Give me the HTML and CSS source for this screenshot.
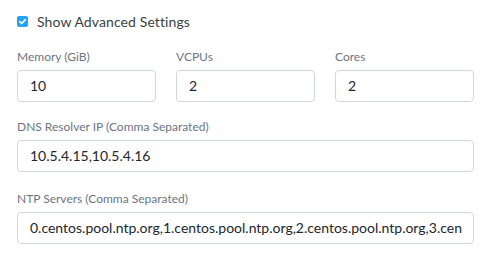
FILE: index.html
```html
<!DOCTYPE html>
<html>
<head>
<meta charset="utf-8">
<link rel="stylesheet" href="styles.css">
</head>
<body>
<div class="form">
  <label class="check-row">
    <span class="checkbox">
      <svg width="11" height="11" viewBox="0 0 11 11"><path d="M2.8 5.6 L4.7 7.5 L8.3 3.6" fill="none" stroke="#fff" stroke-width="1.6" stroke-linecap="round" stroke-linejoin="round"/></svg>
    </span>
    <span class="check-label">Show Advanced Settings</span>
  </label>
  <div class="row three">
    <div class="field">
      <div class="label">Memory (GiB)</div>
      <div class="input"><span class="value">10</span></div>
    </div>
    <div class="field">
      <div class="label">VCPUs</div>
      <div class="input"><span class="value">2</span></div>
    </div>
    <div class="field">
      <div class="label">Cores</div>
      <div class="input"><span class="value">2</span></div>
    </div>
  </div>
  <div class="field full">
    <div class="label">DNS Resolver IP (Comma Separated)</div>
    <div class="input"><span class="value">10.5.4.15,10.5.4.16</span></div>
  </div>
  <div class="field full">
    <div class="label">NTP Servers (Comma Separated)</div>
    <div class="input"><span class="value">0.centos.pool.ntp.org,1.centos.pool.ntp.org,2.centos.pool.ntp.org,3.centos.pool.ntp.org</span></div>
  </div>
</div>
</body>
</html>
```
FILE: styles.css
```css
html, body {
  margin: 0;
  padding: 0;
  background: #fff;
}
body {
  font-family: Lato, "Open Sans", sans-serif;
  color: #22272e;
}
.form {
  padding: 16px 11px 0 17px;
  width: 457px;
}
.check-row {
  display: flex;
  align-items: center;
  height: 11px;
  margin-bottom: 23px;
}
.checkbox {
  width: 11px;
  height: 11px;
  border-radius: 2px;
  background: #22a5f7;
  display: flex;
}
.check-label {
  margin-left: 9px;
  font-size: 14px;
  color: #3a3f45;
  letter-spacing: 0.1px;
}
.row.three {
  display: grid;
  grid-template-columns: 139px 139px 139px;
  column-gap: 20px;
}
.label {
  font-size: 12px;
  color: #6a7685;
  height: 14px;
  line-height: 14px;
  margin-bottom: 6px;
}
.input {
  box-sizing: border-box;
  height: 32px;
  border: 1px solid #d2d6db;
  border-radius: 4px;
  padding: 0 11px 0 12px;
  font-size: 14px;
  line-height: 30px;
  color: #22272e;
}
.value {
  display: block;
  white-space: nowrap;
  overflow: hidden;
}
.field.full {
  margin-top: 18px;
}
.field.full + .field.full {
  margin-top: 20px;
}
```
